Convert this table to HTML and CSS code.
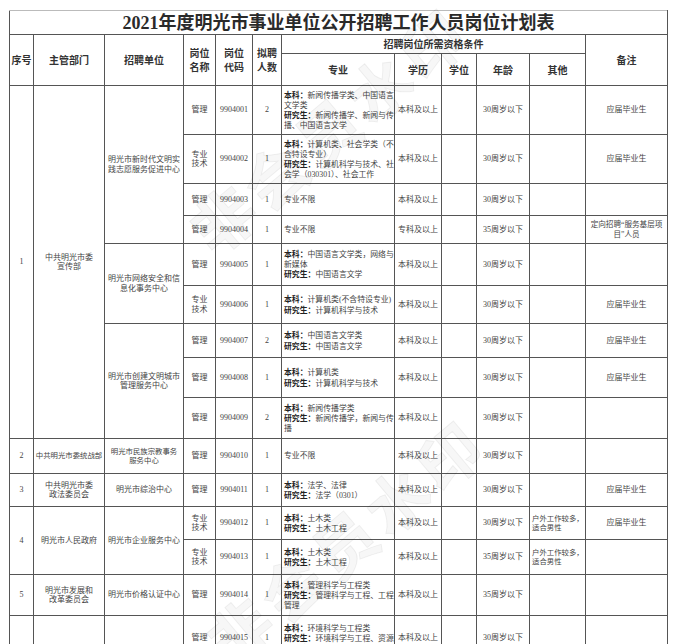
FILE: index.html
```html
<!DOCTYPE html>
<html lang="zh-CN">
<head>
<meta charset="utf-8">
<title>2021年度明光市事业单位公开招聘工作人员岗位计划表</title>
<link rel="stylesheet" href="styles.css">
</head>
<body>
<div class="page">
<table class="plan">
<colgroup>
<col class="c-no"><col class="c-dept"><col class="c-unit"><col class="c-pname"><col class="c-code"><col class="c-num">
<col class="c-major"><col class="c-edu"><col class="c-deg"><col class="c-age"><col class="c-other"><col class="c-note">
</colgroup>
<thead>
<tr class="r24"><th colspan="12" class="title">2021年度明光市事业单位公开招聘工作人员岗位计划表</th></tr>
<tr class="r19">
<th rowspan="2">序号</th>
<th rowspan="2">主管部门</th>
<th rowspan="2">招聘单位</th>
<th rowspan="2" class="two">岗位<br>名称</th>
<th rowspan="2" class="two">岗位<br>代码</th>
<th rowspan="2" class="two">拟聘<br>人数</th>
<th colspan="5">招聘岗位所需资格条件</th>
<th rowspan="2">备注</th>
</tr>
<tr class="r32">
<th>专业</th><th>学历</th><th>学位</th><th>年龄</th><th>其他</th>
</tr>
</thead>
<tbody>
<tr class="r49">
<td rowspan="9">1</td>
<td rowspan="9">中共明光市委<br>宣传部</td>
<td rowspan="4">明光市新时代文明实<br>践志愿服务促进中心</td>
<td>管理</td><td>9904001</td><td>2</td>
<td class="major"><b>本科：</b>新闻传播学类、中国语言<br>文学类<br><b>研究生：</b>新闻传播学、新闻与传<br>播、中国语言文学</td>
<td>本科及以上</td><td></td><td>30周岁以下</td><td></td><td>应届毕业生</td>
</tr>
<tr class="r49">
<td>专业<br>技术</td><td>9904002</td><td>1</td>
<td class="major"><b>本科：</b>计算机类、社会学类（不<br>含特设专业）<br><b>研究生：</b>计算机科学与技术、社<br>会学（030301）、社会工作</td>
<td>本科及以上</td><td></td><td>30周岁以下</td><td></td><td>应届毕业生</td>
</tr>
<tr class="r32">
<td>管理</td><td>9904003</td><td>1</td>
<td class="major">专业不限</td>
<td>本科及以上</td><td></td><td>30周岁以下</td><td></td><td></td>
</tr>
<tr class="r28">
<td>管理</td><td>9904004</td><td>1</td>
<td class="major">专业不限</td>
<td>专科及以上</td><td></td><td>35周岁以下</td><td></td><td class="small">定向招聘“服务基层项<br>目”人员</td>
</tr>
<tr class="r42">
<td rowspan="2">明光市网络安全和信<br>息化事务中心</td>
<td>管理</td><td>9904005</td><td>1</td>
<td class="major"><b>本科：</b>中国语言文学类，网络与<br>新媒体<br><b>研究生：</b>中国语言文学</td>
<td>本科及以上</td><td></td><td>30周岁以下</td><td></td><td></td>
</tr>
<tr class="r38">
<td>专业<br>技术</td><td>9904006</td><td>1</td>
<td class="major"><b>本科：</b>计算机类(不含特设专业)<br><b>研究生：</b>计算机科学与技术</td>
<td>本科及以上</td><td></td><td>30周岁以下</td><td></td><td>应届毕业生</td>
</tr>
<tr class="r34">
<td rowspan="3">明光市创建文明城市<br>管理服务中心</td>
<td>管理</td><td>9904007</td><td>2</td>
<td class="major"><b>本科：</b>中国语言文学类<br><b>研究生：</b>中国语言文学</td>
<td>本科及以上</td><td></td><td>30周岁以下</td><td></td><td>应届毕业生</td>
</tr>
<tr class="r40">
<td>管理</td><td>9904008</td><td>1</td>
<td class="major"><b>本科：</b>计算机类<br><b>研究生：</b>计算机科学与技术</td>
<td>本科及以上</td><td></td><td>30周岁以下</td><td></td><td>应届毕业生</td>
</tr>
<tr class="r41">
<td>管理</td><td>9904009</td><td>2</td>
<td class="major"><b>本科：</b>新闻传播学类<br><b>研究生：</b>新闻传播学，新闻与传<br>播</td>
<td>本科及以上</td><td></td><td>30周岁以下</td><td></td><td></td>
</tr>
<tr class="r35">
<td>2</td>
<td class="tight">中共明光市委统战部</td>
<td class="tight">明光市民族宗教事务<br>服务中心</td>
<td>管理</td><td>9904010</td><td>1</td>
<td class="major">专业不限</td>
<td>本科及以上</td><td></td><td>30周岁以下</td><td></td><td></td>
</tr>
<tr class="r33">
<td>3</td>
<td>中共明光市委<br>政法委员会</td>
<td>明光市综治中心</td>
<td>管理</td><td>9904011</td><td>1</td>
<td class="major"><b>本科：</b>法学、法律<br><b>研究生：</b>法学（0301）</td>
<td>本科及以上</td><td></td><td>30周岁以下</td><td></td><td>应届毕业生</td>
</tr>
<tr class="r33">
<td rowspan="2">4</td>
<td rowspan="2">明光市人民政府</td>
<td rowspan="2">明光市企业服务中心</td>
<td>专业<br>技术</td><td>9904012</td><td>1</td>
<td class="major"><b>本科：</b>土木类<br><b>研究生：</b>土木工程</td>
<td>本科及以上</td><td></td><td>30周岁以下</td><td class="other">户外工作较多，<br>适合男性</td><td>应届毕业生</td>
</tr>
<tr class="r35">
<td>专业<br>技术</td><td>9904013</td><td>1</td>
<td class="major"><b>本科：</b>土木类<br><b>研究生：</b>土木工程</td>
<td>本科及以上</td><td></td><td>35周岁以下</td><td class="other">户外工作较多，<br>适合男性</td><td></td>
</tr>
<tr class="r41">
<td>5</td>
<td>明光市发展和<br>改革委员会</td>
<td>明光市价格认证中心</td>
<td>管理</td><td>9904014</td><td>1</td>
<td class="major"><b>本科：</b>管理科学与工程类<br><b>研究生：</b>管理科学与工程、工程<br>管理</td>
<td>本科及以上</td><td></td><td>35周岁以下</td><td></td><td></td>
</tr>
<tr class="r45">
<td></td>
<td></td>
<td></td>
<td>管理</td><td>9904015</td><td>1</td>
<td class="major"><b>本科：</b>环境科学与工程类<br><b>研究生：</b>环境科学与工程、资源<br>与环境</td>
<td>本科及以上</td><td></td><td>30周岁以下</td><td></td><td></td>
</tr>
</tbody>
</table>
<div class="watermark wm-top">非会员水印</div>
<div class="watermark wm-bottom">非会员水印</div>
</div>
</body>
</html>
```
FILE: styles.css
```css
html, body {
  margin: 0;
  padding: 0;
  background: #fff;
  overflow: hidden;
}
.page {
  position: relative;
  padding: 10px 0 0 9px;
  width: 677px;
  height: 644px;
  box-sizing: border-box;
  overflow: hidden;
}
.plan {
  border-collapse: collapse;
  table-layout: fixed;
  width: 658px;
  font-family: "Liberation Serif", "Noto Sans CJK SC", serif;
  font-size: 8px;
  line-height: 9.5px;
  color: #444;
}
.c-no { width: 24px; }
.c-dept { width: 71px; }
.c-unit { width: 79px; }
.c-pname { width: 32px; }
.c-code { width: 37px; }
.c-num { width: 29px; }
.c-major { width: 113px; }
.c-edu { width: 47px; }
.c-deg { width: 35px; }
.c-age { width: 53px; }
.c-other { width: 56px; }
.c-note { width: 82px; }

.plan th, .plan td {
  border: 1px solid #555;
  padding: 0 1px;
  text-align: center;
  vertical-align: middle;
  white-space: nowrap;
  overflow: hidden;
}
.plan th {
  font-family: "Noto Sans CJK SC", sans-serif;
  font-size: 10px;
  line-height: 12px;
  font-weight: 700;
  color: #333;
}
.plan th.two {
  line-height: 14px;
}
.plan th.title {
  font-family: "Liberation Serif", "Noto Sans CJK SC", serif;
  font-size: 18px;
  line-height: 22px;
  font-weight: 700;
  letter-spacing: 0;
  color: #2a2a2a;
  border-top-color: #bbb;
  padding-top: 1px;
}
.plan td.major {
  text-align: left;
  padding-left: 2px;
  font-size: 7.85px;
}
.plan td.major b {
  font-family: "Noto Sans CJK SC", sans-serif;
  font-weight: 700;
  color: #222;
}
.plan td.other {
  text-align: left;
  padding-left: 2px;
  font-size: 7.4px;
}
.plan td.tight {
  font-size: 7.4px;
}
.plan td.small {
  font-size: 7.6px;
}

.r19 { height: 19px; }
.r24 { height: 24px; }
.r28 { height: 28px; }
.r32 { height: 32px; }
.r33 { height: 33px; }
.r34 { height: 34px; }
.r35 { height: 35px; }
.r38 { height: 38px; }
.r40 { height: 40px; }
.r41 { height: 41px; }
.r42 { height: 42px; }
.r45 { height: 45px; }
.r49 { height: 49px; }

.watermark {
  position: absolute;
  font-family: "Noto Sans CJK SC", sans-serif;
  font-size: 62px;
  font-weight: 700;
  letter-spacing: 6px;
  line-height: 1;
  color: rgba(0, 0, 0, 0.03);
  -webkit-text-stroke: 1px rgba(0, 0, 0, 0.06);
  white-space: nowrap;
  pointer-events: none;
  transform: translate(-50%, -50%) rotate(-40deg);
}
.wm-top {
  left: 328px;
  top: 128px;
}
.wm-bottom {
  left: 345px;
  top: 540px;
}
```
